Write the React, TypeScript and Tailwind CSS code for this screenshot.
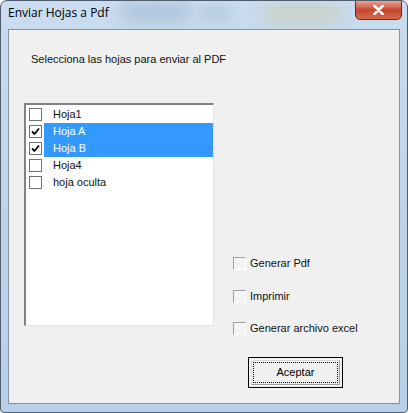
import React from "react";

const ui = { fontFamily: '"Liberation Sans", Arial, sans-serif' };
const title = { fontFamily: '"Segoe UI", "Open Sans", "Noto Sans", sans-serif' };

function ListCheck({ checked }: { checked: boolean }) {
  return (
    <div className="w-[13px] h-[13px] border border-[#707070] bg-white flex items-center justify-center shrink-0">
      {checked && (
        <svg width="9" height="9" viewBox="0 0 9 9">
          <path d="M1 4.5 L3.5 7 L8 1.5" stroke="#000" strokeWidth="1.8" fill="none" />
        </svg>
      )}
    </div>
  );
}

function Row({ label, checked, selected }: { label: string; checked: boolean; selected: boolean }) {
  return (
    <div className="h-[17px] flex items-center">
      <div className="w-[18px] flex justify-end pr-[2px]">
        <ListCheck checked={checked} />
      </div>
      <div
        className={
          "h-[17px] flex-1 flex items-center pl-[9px] text-[11px] " +
          (selected ? "bg-[#3399ff] text-white" : "text-[#111]")
        }
      >
        {label}
      </div>
    </div>
  );
}

function FlatCheck({ label, className }: { label: string; className?: string }) {
  return (
    <div className={"flex items-center h-[13px] " + (className ?? "")}>
      <div className="w-[13px] h-[13px] border-t border-l border-t-[#a0a0a0] border-l-[#a0a0a0] border-b border-r border-b-white border-r-white bg-[#f4f4f4] shrink-0" />
      <span className="ml-[4px] text-[11px] text-[#111] leading-none">{label}</span>
    </div>
  );
}

export default function App() {
  const rows = [
    { label: "Hoja1", checked: false, selected: false },
    { label: "Hoja A", checked: true, selected: true },
    { label: "Hoja B", checked: true, selected: true },
    { label: "Hoja4", checked: false, selected: false },
    { label: "hoja oculta", checked: false, selected: false },
  ];
  return (
    <div className="w-[408px] h-[413px] bg-white" style={ui}>
      <div className="relative w-[408px] h-[413px] rounded-t-[7px] rounded-b-[4px] border border-[#4f5d6c] bg-gradient-to-b from-[#c9dcf0] via-[#bfd4ea] to-[#b7cfe8] overflow-hidden flex flex-col">
        {/* glass blur spots */}
        <div className="absolute left-[120px] top-[2px] w-[70px] h-[18px] bg-[#9fb6cf] rounded-full blur-[8px] opacity-70" />
        <div className="absolute left-[260px] top-[4px] w-[80px] h-[18px] bg-[#c8cdb8] rounded-full blur-[8px] opacity-80" />
        <div className="absolute left-[200px] top-[6px] w-[30px] h-[14px] bg-[#a9bdd3] rounded-full blur-[6px] opacity-60" />
        {/* title bar */}
        <div className="relative h-[28px] flex items-start">
          <span className="ml-[7px] mt-[6px] text-[12px] text-black leading-none" style={title}>
            Enviar Hojas a Pdf
          </span>
          <div className="ml-auto mr-[5px] -mt-[1px] w-[47px] h-[20px] rounded-b-[5px] border border-[#6b2b22] bg-gradient-to-b from-[#e8a394] via-[#c7452e] to-[#d46a50] flex items-center justify-center">
            <svg width="11" height="10" viewBox="0 0 11 10">
              <path d="M1.5 1 L9.5 9 M9.5 1 L1.5 9" stroke="#fff" strokeWidth="2.6" strokeLinecap="round" />
            </svg>
          </div>
        </div>
        {/* client area */}
        <div className="relative mx-[7px] h-[375px] border border-[#8393a6] bg-[#f0f0f0] flex flex-col pl-[15px]">
          <div className="ml-[7px] mt-[23px] h-[13px] text-[11px] leading-[13px] text-[#111]">
            Selecciona las hojas para enviar al PDF
          </div>
          <div className="flex mt-[37px]">
            <div className="w-[190px] h-[223px] bg-white border-t-2 border-l-2 border-t-[#828282] border-l-[#828282] border-b border-r border-b-[#e3e3e3] border-r-[#e3e3e3] pt-[1px]">
              {rows.map((r) => (
                <Row key={r.label} {...r} />
              ))}
            </div>
            <div className="ml-[19px] flex flex-col">
              <FlatCheck label="Generar Pdf" className="mt-[154px]" />
              <FlatCheck label="Imprimir" className="mt-[20px]" />
              <FlatCheck label="Generar archivo excel" className="mt-[19px]" />
              <div className="ml-[15px] mt-[22px] w-[95px] h-[31px] border border-black bg-[#f0f0f0] p-[2px]">
                <div className="w-full h-full border border-[#dcdcdc] border-b-[#a0a0a0] border-r-[#a0a0a0] flex">
                  <div className="flex-1 m-[1px] border border-dotted border-black flex items-center justify-center text-[11px] text-black">
                    Aceptar
                  </div>
                </div>
              </div>
            </div>
          </div>
        </div>
      </div>
    </div>
  );
}
